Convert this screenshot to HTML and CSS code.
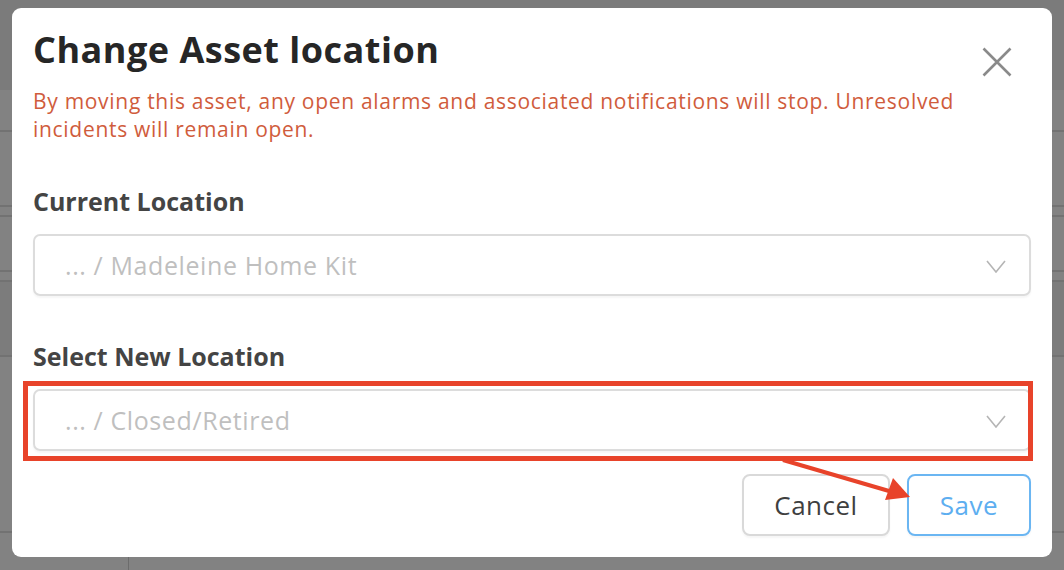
FILE: index.html
```html
<!DOCTYPE html>
<html lang="en">
<head>
    <meta charset="UTF-8">
    <meta name="viewport" content="width=device-width, initial-scale=1.0">
    <title>Change Asset location</title>
    <link rel="stylesheet" href="styles.css">
</head>
<body>
    <!-- pagina de fondo, oscurecida por el modal -->
    <div class="page">
        <div class="page-header"></div>
        <div class="page-row" style="height: 42px"></div>
        <div class="page-row" style="height: 75px"></div>
        <div class="page-row" style="height: 10px"></div>
        <div class="page-row" style="height: 55px"></div>
        <div class="page-row" style="height: 10px"></div>
        <div class="page-row page-row-dark" style="height: 75px"></div>
        <div class="page-row" style="height: 176px"></div>
        <div class="page-foot">
            <span class="page-chevron"></span>
            <span class="page-divider"></span>
        </div>
    </div>

    <div class="modal">
        <div class="modal-head">
            <h1>Change Asset location</h1>
            <button class="close" aria-label="Close">
                <svg width="30" height="30" viewBox="0 0 30 30">
                    <path d="M1.5 1.5 L28.5 28.5 M28.5 1.5 L1.5 28.5" stroke="#8a8a8a" stroke-width="2.6" fill="none"/>
                </svg>
            </button>
        </div>
        <p class="warning">By moving this asset, any open alarms and associated notifications will stop. Unresolved incidents will remain open.</p>

        <div class="field">
            <label>Current Location</label>
            <div class="select">
                <span>... / Madeleine Home Kit</span>
                <svg class="chevron" width="20" height="13" viewBox="0 0 20 13">
                    <path d="M1 1 L10 12 L19 1" stroke="#b5b5b5" stroke-width="1.6" fill="none"/>
                </svg>
            </div>
        </div>

        <div class="field field-new">
            <label>Select New Location</label>
            <div class="select">
                <span>... / Closed/Retired</span>
                <svg class="chevron" width="20" height="13" viewBox="0 0 20 13">
                    <path d="M1 1 L10 12 L19 1" stroke="#b5b5b5" stroke-width="1.6" fill="none"/>
                </svg>
            </div>
            <!-- recuadro rojo de la anotacion -->
            <div class="highlight"></div>
        </div>

        <div class="actions">
            <button class="btn">Cancel</button>
            <button class="btn btn-save">Save</button>
        </div>

        <!-- flecha roja de la anotacion -->
        <svg class="arrow" width="142" height="55" viewBox="0 0 142 55">
            <line x1="12" y1="10" x2="118" y2="41" stroke="#e8432a" stroke-width="4"/>
            <polygon points="122,28 139,47 114,50" fill="#e8432a"/>
        </svg>
    </div>
</body>
</html>
```

FILE: styles.css
```css
body {
    margin: 0;
    width: 1064px;
    height: 570px;
    overflow: hidden;
    position: relative;
    background-color: #828282;
    font-family: 'Open Sans', 'Liberation Sans', sans-serif;
}

.page-header {
    height: 90px;
    background-color: #7b7b7b;
}

.page-row {
    border-bottom: 2px solid #727272;
    box-sizing: border-box;
}

.page-row-dark {
    background-color: #7c7c7c;
}

.page-foot {
    position: relative;
    height: 40px;
}

.page-chevron {
    position: absolute;
    left: 86px;
    top: 2px;
    width: 9px;
    height: 9px;
    border-right: 1.5px solid #5e5e5e;
    border-bottom: 1.5px solid #5e5e5e;
    transform: rotate(45deg);
}

.page-divider {
    position: absolute;
    left: 128px;
    top: 0;
    width: 1px;
    height: 40px;
    background-color: #6c6c6c;
}

.modal {
    position: absolute;
    left: 12px;
    top: 8px;
    width: 1040px;
    height: 549px;
    box-sizing: border-box;
    padding: 20px 21px 0 21px;
    background-color: #fff;
    border-radius: 9px;
}

.modal-head {
    display: flex;
    justify-content: space-between;
    align-items: flex-start;
}

h1 {
    margin: 0;
    font-size: 36px;
    line-height: 44px;
    font-weight: 700;
    color: #262626;
    letter-spacing: 0.5px;
}

.close {
    border: 0;
    background: none;
    padding: 0;
    margin: 19px 19px 0 0;
    width: 30px;
    height: 30px;
    cursor: pointer;
}

.warning {
    margin: 10px 0 0 0;
    width: 975px;
    font-size: 21px;
    line-height: 28px;
    letter-spacing: 0.7px;
    color: #d05c3c;
}

.field {
    position: relative;
    margin-top: 43px;
}

.field-new {
    margin-top: 45px;
}

label {
    display: block;
    font-size: 25px;
    line-height: 30px;
    font-weight: 700;
    color: #444;
}

.select {
    display: flex;
    align-items: center;
    justify-content: space-between;
    height: 62px;
    margin-top: 18px;
    padding: 0 23px 0 30px;
    box-sizing: border-box;
    border: 2px solid #dcdcdc;
    border-radius: 7px;
    box-shadow: 0 2px 2px rgba(0, 0, 0, 0.04);
    font-size: 25px;
    letter-spacing: 0.6px;
    color: #bfbfbf;
}

.chevron {
    margin-top: 2px;
}

.highlight {
    position: absolute;
    left: -10px;
    right: -2px;
    bottom: -10px;
    height: 80px;
    box-sizing: border-box;
    border: 5px solid #e8432a;
}

.actions {
    display: flex;
    justify-content: flex-end;
    gap: 17px;
    margin-top: 23px;
}

.btn {
    height: 62px;
    box-sizing: border-box;
    border: 2px solid #d9d9d9;
    border-radius: 8px;
    background-color: #fff;
    box-shadow: 0 2px 2px rgba(0, 0, 0, 0.04);
    font-family: 'Open Sans', 'Liberation Sans', sans-serif;
    font-size: 26px;
    letter-spacing: 0.5px;
    color: #3f3f3f;
    width: 148px;
}

.btn-save {
    width: 124px;
    border-color: #6bb6f2;
    color: #5daef0;
}

.arrow {
    position: absolute;
    left: 759px;
    top: 442px;
}
```
